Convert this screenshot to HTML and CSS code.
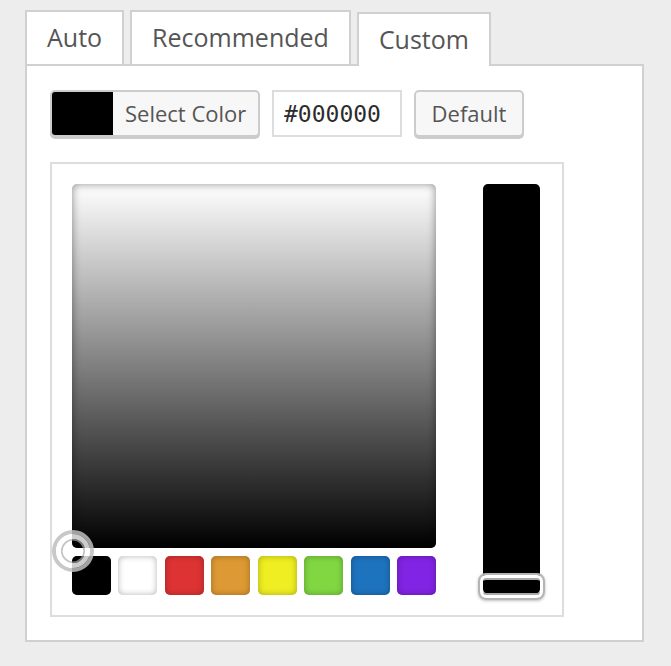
FILE: index.html
```html
<!DOCTYPE html>
<html>
<head>
<meta charset="utf-8">
<link rel="stylesheet" href="styles.css">
</head>
<body>
<div class="tabs">
  <div class="tab">Auto</div>
  <div class="tab">Recommended</div>
  <div class="tab active">Custom</div>
</div>
<div class="panel">
  <div class="controls">
    <button class="select-btn"><span class="current"></span><span class="label">Select Color</span></button>
    <input class="hex" type="text" value="#000000">
    <button class="default-btn">Default</button>
  </div>
  <div class="picker">
    <div class="left">
      <div class="square"></div>
      <svg class="square-handle" width="44" height="44" viewBox="0 0 44 44">
        <circle cx="22" cy="22" r="19" fill="none" stroke="rgba(190,190,190,0.85)" stroke-width="4"/>
        <circle cx="22" cy="22" r="14.5" fill="none" stroke="rgba(255,255,255,0.8)" stroke-width="5"/>
        <circle cx="22" cy="22" r="11.2" fill="none" stroke="rgba(170,170,170,0.7)" stroke-width="1.6"/>
      </svg>
      <div class="swatches">
        <span class="sw" style="background:#000000"></span>
        <span class="sw" style="background:#ffffff"></span>
        <span class="sw" style="background:#dd3333"></span>
        <span class="sw" style="background:#dd9933"></span>
        <span class="sw" style="background:#eeee22"></span>
        <span class="sw" style="background:#81d742"></span>
        <span class="sw" style="background:#1e73be"></span>
        <span class="sw" style="background:#8224e3"></span>
      </div>
    </div>
    <div class="strip-wrap">
      <div class="strip"></div>
      <div class="strip-handle"></div>
    </div>
  </div>
</div>
</body>
</html>
```
FILE: styles.css
```css
* { box-sizing: border-box; }
html, body { margin: 0; }
body {
  background: #ededed;
  padding: 10px 0 0 25px;
  font-family: "Open Sans", "Noto Sans", sans-serif;
  color: #555;
}
.tabs {
  display: flex;
  align-items: flex-end;
  gap: 6px;
  height: 54px;
}
.tab {
  height: 54px;
  padding: 0 20px;
  border: 2px solid #d0d0d0;
  border-bottom: none;
  background: #fff;
  font-size: 25px;
  line-height: 50px;
  color: #555;
}
.tab.active {
  margin-bottom: -2px;
  position: relative;
  z-index: 1;
  height: 54px;
}
.panel {
  width: 619px;
  height: 578px;
  background: #fff;
  border: 2px solid #d0d0d0;
  padding: 24px 23px;
}
.controls {
  display: flex;
  align-items: flex-start;
  gap: 12px;
  height: 49px;
}
.select-btn, .default-btn {
  font-family: inherit;
  font-size: 22px;
  color: #555;
  background: #f7f7f7;
  border: 2px solid #ccc;
  border-radius: 5px;
  box-shadow: 0 2px 0 #ccc;
  height: 47px;
  padding: 0;
  margin: 0;
}
.select-btn {
  display: flex;
  align-items: stretch;
  width: 210px;
  overflow: hidden;
}
.select-btn .current {
  width: 61px;
  background: #000;
}
.select-btn .label {
  padding-left: 12px;
  line-height: 43px;
  white-space: nowrap;
}
.hex {
  width: 130px;
  height: 47px;
  border: 2px solid #ddd;
  background: #fff;
  padding: 0 10px;
  font-family: "DejaVu Sans Mono", "Liberation Mono", monospace;
  font-size: 23px;
  color: #2c2c2c;
  margin: 0;
  outline: none;
}
.default-btn {
  width: 110px;
  line-height: 43px;
}
.picker {
  margin-top: 23px;
  width: 514px;
  height: 455px;
  border: 2px solid #ddd;
  padding: 20px;
  display: flex;
  gap: 47px;
}
.left {
  position: relative;
  width: 364px;
}
.square {
  width: 364px;
  height: 364px;
  border-radius: 5px;
  background: linear-gradient(to bottom, #ffffff, #000000);
  box-shadow: inset 0 0 8px rgba(0, 0, 0, 0.45);
}
.square-handle {
  position: absolute;
  left: -21px;
  top: 345px;
}
.swatches {
  margin-top: 8px;
  display: flex;
  justify-content: space-between;
}
.sw {
  width: 39px;
  height: 39px;
  border-radius: 5px;
  box-shadow: inset 0 0 6px rgba(0, 0, 0, 0.3);
}
.strip-wrap {
  position: relative;
  width: 57px;
}
.strip {
  width: 57px;
  height: 410px;
  background: #000;
  border-radius: 5px;
}
.strip-handle {
  position: absolute;
  left: -5px;
  top: 389px;
  width: 67px;
  height: 27px;
  border: 2px solid #b4b4b4;
  border-radius: 8px;
  box-shadow: inset 0 0 0 3px #fff, inset 0 5px 0 #a8a8a8, inset 0 -5px 0 #a8a8a8, 0 1px 3px rgba(0,0,0,0.25);
}
```
